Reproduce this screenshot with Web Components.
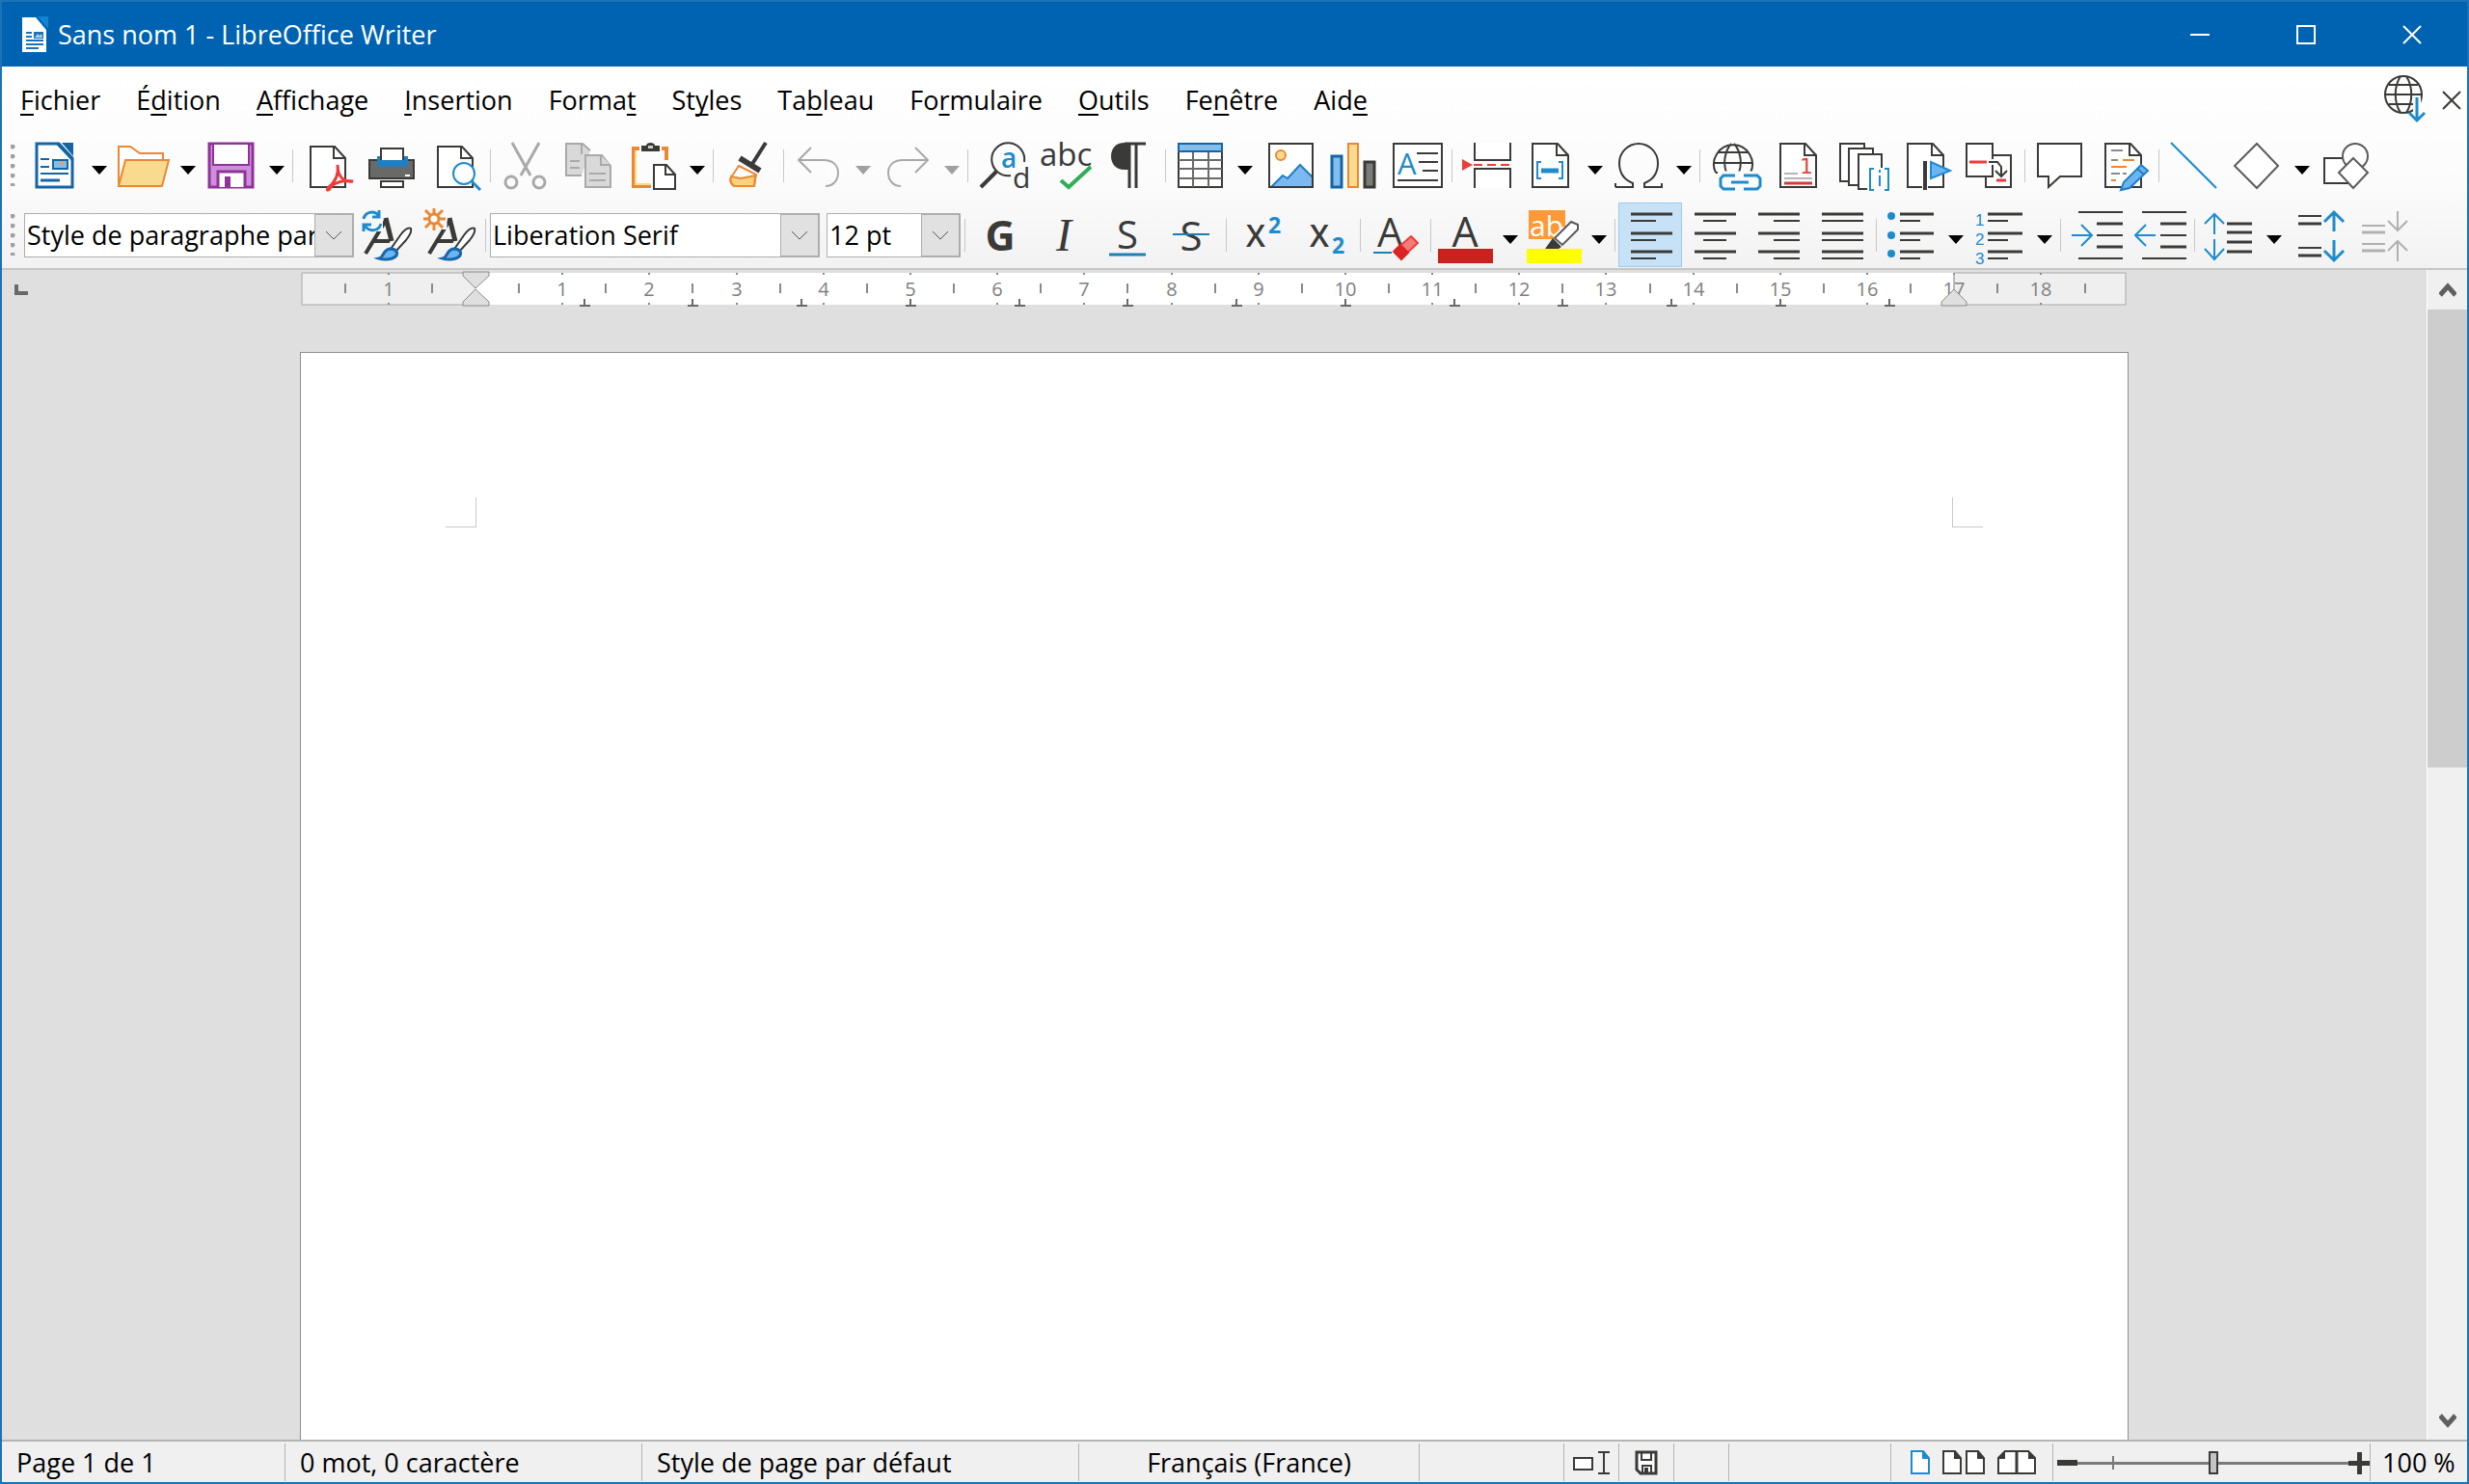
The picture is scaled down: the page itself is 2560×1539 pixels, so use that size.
<!DOCTYPE html>
<html lang="fr">
<head>
<meta charset="utf-8">
<title>Sans nom 1 - LibreOffice Writer</title>
<style>
  html, body { margin: 0; height: 100%; }
  body {
    font-family: "Open Sans", "Noto Sans", sans-serif;
    font-size: 27px;
    color: #000;
    overflow: hidden;
  }
</style>
</head>
<body>

<writer-window>
  <title-bar slot="title">Sans nom 1 - LibreOffice Writer</title-bar>

  <menu-bar slot="menu">
    <menu-item><u>F</u>ichier</menu-item>
    <menu-item>É<u>d</u>ition</menu-item>
    <menu-item><u>A</u>ffichage</menu-item>
    <menu-item><u>I</u>nsertion</menu-item>
    <menu-item>Forma<u>t</u></menu-item>
    <menu-item>St<u>y</u>les</menu-item>
    <menu-item>Ta<u>b</u>leau</menu-item>
    <menu-item>Fo<u>r</u>mulaire</menu-item>
    <menu-item><u>O</u>utils</menu-item>
    <menu-item>Fe<u>n</u>être</menu-item>
    <menu-item>Aid<u>e</u></menu-item>
  </menu-bar>

  <tool-bar slot="tools" label="Standard">
    <tool-button icon="new" label="Nouveau" menu></tool-button>
    <tool-button icon="open" label="Ouvrir" menu></tool-button>
    <tool-button icon="save" label="Enregistrer" menu></tool-button>
    <tool-separator></tool-separator>
    <tool-button icon="pdf" label="Exporter au format PDF"></tool-button>
    <tool-button icon="print" label="Imprimer"></tool-button>
    <tool-button icon="preview" label="Aperçu"></tool-button>
    <tool-separator></tool-separator>
    <tool-button icon="cut" label="Couper" disabled></tool-button>
    <tool-button icon="copy" label="Copier" disabled></tool-button>
    <tool-button icon="paste" label="Coller" menu></tool-button>
    <tool-separator></tool-separator>
    <tool-button icon="clone" label="Cloner le formatage"></tool-button>
    <tool-separator></tool-separator>
    <tool-button icon="undo" label="Annuler" menu disabled></tool-button>
    <tool-button icon="redo" label="Rétablir" menu disabled></tool-button>
    <tool-separator></tool-separator>
    <tool-button icon="find" label="Rechercher et remplacer"></tool-button>
    <tool-button icon="spelling" label="Orthographe"></tool-button>
    <tool-button icon="marks" label="Marques de formatage"></tool-button>
    <tool-separator></tool-separator>
    <tool-button icon="table" label="Tableau" menu></tool-button>
    <tool-button icon="image" label="Image"></tool-button>
    <tool-button icon="chart" label="Diagramme"></tool-button>
    <tool-button icon="textbox" label="Zone de texte"></tool-button>
    <tool-separator></tool-separator>
    <tool-button icon="pagebreak" label="Saut de page"></tool-button>
    <tool-button icon="field" label="Champ" menu></tool-button>
    <tool-button icon="symbol" label="Caractère spécial" menu></tool-button>
    <tool-separator></tool-separator>
    <tool-button icon="link" label="Hyperlien"></tool-button>
    <tool-button icon="footnote" label="Note de bas de page"></tool-button>
    <tool-button icon="endnote" label="Entrée d'index"></tool-button>
    <tool-button icon="bookmark" label="Repère de texte"></tool-button>
    <tool-button icon="crossref" label="Renvoi"></tool-button>
    <tool-separator></tool-separator>
    <tool-button icon="comment" label="Commentaire"></tool-button>
    <tool-button icon="track" label="Suivi des modifications"></tool-button>
    <tool-separator></tool-separator>
    <tool-button icon="line" label="Ligne"></tool-button>
    <tool-button icon="shapes" label="Formes" menu></tool-button>
    <tool-button icon="draw" label="Fonctions de dessin"></tool-button>
  </tool-bar>

  <tool-bar slot="tools" label="Formatage">
    <combo-box label="Style de paragraphe" value="Style de paragraphe par défaut"></combo-box>
    <tool-button icon="styleupdate" label="Actualiser le style"></tool-button>
    <tool-button icon="stylenew" label="Nouveau style"></tool-button>
    <tool-separator></tool-separator>
    <combo-box label="Nom de police" value="Liberation Serif"></combo-box>
    <combo-box label="Taille de police" value="12 pt" narrow></combo-box>
    <tool-separator></tool-separator>
    <tool-button icon="bold" label="Gras"></tool-button>
    <tool-button icon="italic" label="Italique"></tool-button>
    <tool-button icon="underline" label="Souligné"></tool-button>
    <tool-button icon="strike" label="Barré"></tool-button>
    <tool-separator></tool-separator>
    <tool-button icon="sup" label="Exposant"></tool-button>
    <tool-button icon="sub" label="Indice"></tool-button>
    <tool-separator></tool-separator>
    <tool-button icon="clear" label="Effacer le formatage"></tool-button>
    <tool-separator></tool-separator>
    <tool-button icon="fontcolor" label="Couleur de police" menu></tool-button>
    <tool-button icon="highlight" label="Surlignage" menu></tool-button>
    <tool-separator></tool-separator>
    <tool-button icon="left" label="Aligner à gauche" active></tool-button>
    <tool-button icon="center" label="Centrer"></tool-button>
    <tool-button icon="right" label="Aligner à droite"></tool-button>
    <tool-button icon="justify" label="Justifier"></tool-button>
    <tool-separator></tool-separator>
    <tool-button icon="bullets" label="Puces" menu></tool-button>
    <tool-button icon="numbers" label="Numérotation" menu></tool-button>
    <tool-separator></tool-separator>
    <tool-button icon="indent" label="Augmenter le retrait"></tool-button>
    <tool-button icon="outdent" label="Diminuer le retrait"></tool-button>
    <tool-separator></tool-separator>
    <tool-button icon="spacing" label="Interligne" menu></tool-button>
    <tool-button icon="parainc" label="Augmenter l'espacement"></tool-button>
    <tool-button icon="paradec" label="Diminuer l'espacement" disabled></tool-button>
  </tool-bar>

  <doc-ruler slot="ruler"></doc-ruler>
  <doc-page slot="page"></doc-page>
  <scroll-bar slot="scroll"></scroll-bar>
  <status-bar slot="status"></status-bar>
</writer-window>

<script>
// Toolbar icons, all on a 56 x 56 grid
const INK = '#3a3a38';
const BLUE = '#1e8bcd';
const RED = '#ed3d3b';
const GREY = '#a9a9a9';

const sheet = `<path fill="#fff" stroke="${INK}" d="M9 5H35L46 17V50H9Z"/><path fill="none" stroke="${INK}" d="M34 5V17H46"/>`;

const brushA = `
  <path stroke="${INK}" stroke-width="4" fill="none" d="M6 47L28 11"/>
  <path stroke="${INK}" stroke-width="5" fill="none" d="M27 10L33 34"/>
  <path stroke="${INK}" stroke-width="4" d="M13 34H31"/>
  <path fill="#fff" stroke="${INK}" stroke-width="2" d="M53 21C49 19 45 24 42 28L33 41L37 45L48 33C52 28 54 24 53 21Z"/>
  <path fill="#6cb4f2" stroke="#1667ad" stroke-width="3" d="M20 52C25 51 24 43 31 42C37 42 40 45 38 49C35 53 26 54 20 52Z"/>`;

// one paragraph of text lines: y positions with their left and right ends
function rows(list, colour = INK) {
  return list.map(([y, x1, x2, w = 3]) => `<path stroke="${colour}" stroke-width="${w}" d="M${x1} ${y}H${x2}"/>`).join('');
}

const letter = (txt, x, y, size, extra = '') => `<text x="${x}" y="${y}" font-size="${size}" fill="${INK}" stroke="none" ${extra}>${txt}</text>`;

const ICONS = {
  new: `<path fill="#fff" stroke="#1565a5" stroke-width="3" d="M9 5H32L46 20V50H9Z"/>
    <path fill="#1565a5" d="M35 4H47V18Z"/><path stroke="#1565a5" d="M30 5L46 22"/>
    ${rows([[21, 13, 22, 2], [29, 13, 22, 2], [36, 13, 42, 2], [43, 13, 33, 3]], '#1565a5')}
    <rect x="26" y="22" width="15" height="9" fill="#83beec" stroke="#1565a5"/><circle cx="35" cy="25" r="2" fill="#f5a04c"/>`,
  open: `<path fill="#fff" stroke="#ed8733" d="M2 48V8H14L24 15H48V22"/>
    <path fill="#f8db8f" stroke="#ed8733" d="M9 22H54L47 49H2Z"/>`,
  save: `<rect x="4" y="5" width="45" height="45" fill="#cd8fda" stroke="#8e3399" stroke-width="3"/>
    <path fill="#fff" stroke="#8e3399" d="M8 5H45V27H8Z"/>
    <path fill="#fff" stroke="#8e3399" stroke-width="3" d="M13 50V34H41V50"/>
    <path fill="#8e3399" d="M20 39H26V50H20Z"/>`,
  pdf: `<path fill="#fff" stroke="${INK}" d="M10 8H35L46 20V50H10Z"/><path stroke="${INK}" fill="none" d="M34 8V20H46"/>
    <path stroke="${RED}" stroke-width="3" fill="none" d="M38 27C38 41 46 45 54 44C44 42 34 46 31 50C29 54 26 54 28 51C34 46 40 38 38 27"/>`,
  print: `<path fill="#696966" stroke="${INK}" d="M5 22H51V41H5Z"/>
    <path fill="#1e7fc2" d="M13 18H45V29H13Z"/>
    <path fill="#fff" stroke="${INK}" d="M17 23V10H40V23"/><path fill="#1e7fc2" d="M16 22H41V27H16Z"/>
    <path fill="#fff" d="M42 37H47V39H42Z"/><path fill="#fff" stroke="${INK}" d="M17 44H40V50H17Z"/>`,
  preview: `<path fill="#fff" stroke="${INK}" d="M10 8H35L46 20V50H10Z"/><path stroke="${INK}" fill="none" d="M34 8V20H46"/>
    <circle cx="37" cy="36" r="11" fill="#fff" stroke="${BLUE}"/><path stroke="${BLUE}" stroke-width="3" d="M45 44L54 53"/>`,
  cut: `<g fill="none" stroke="${GREY}" stroke-width="3"><path d="M14 4L33 38M42 4L23 38"/><circle cx="13" cy="45" r="6"/><circle cx="42" cy="45" r="6"/></g>`,
  copy: `<g fill="#d9d9d9" stroke="${GREY}"><path d="M20 38H4V5H21L29 12"/><path d="M20 5V16"/><path d="M8 23H18M8 30H18"/>
    <path d="M24 17H41L50 28V50H24Z"/><path d="M40 17V27H50M28 36H45M28 43H45"/></g>`,
  paste: `<path fill="none" stroke="#ed8733" stroke-width="4" d="M14 10H8V49H26M37 10H42V22"/>
    <path fill="none" stroke="#f8db8f" stroke-width="2" d="M10 12V47H26"/>
    <path fill="${INK}" d="M16 7H21C21 3 30 3 30 7H35V13H16Z"/><path fill="#ccc" d="M23 7H28V10H23Z"/>
    <path fill="#fff" stroke="${INK}" d="M29 27H42L51 37V52H29Z"/><path fill="none" stroke="${INK}" d="M41 27V37H51"/>`,
  clone: `<path fill="#fff" stroke="#ed8733" d="M18 28L36 37L34 49H13C9 46 9 42 10 40Z"/>
    <path fill="#f8d27f" stroke="#ed8733" d="M10 39L20 41L35 38L34 49H13C9 46 9 42 10 39Z"/>
    <path stroke="${INK}" stroke-width="4" d="M46 4L32 26"/><path stroke="${INK}" stroke-width="6" d="M19 20L40 33"/>`,
  undo: `<path fill="none" stroke="${GREY}" d="M20 9L7 22L20 35M7 22H33C43 22 48 28 48 35C48 43 43 49 35 49"/>`,
  redo: `<path fill="none" stroke="${GREY}" d="M36 9L49 22L36 35M49 22H23C13 22 8 28 8 35C8 43 13 49 21 49"/>`,
  find: `<path fill="none" stroke="${INK}" d="M50 24A17 17 0 1 0 36 38"/><path stroke="${INK}" stroke-width="4" d="M21 34L5 50"/>
    ${letter('a', 26, 30, 28, 'style="fill:#1e8bcd" font-weight="600"')}${letter('d', 38, 51, 30)}`,
  spelling: `${letter('abc', 0, 28, 33)}<path fill="none" stroke="#2fae5a" stroke-width="4" d="M22 43L30 50L53 29"/>`,
  marks: `<path fill="${INK}" d="M27 4H22C13 4 8 10 8 18C8 26 13 32 22 32H27Z"/><path stroke="${INK}" fill="none" stroke-width="3" d="M22 5H44M27 5V51M34 5V51"/>`,
  table: `<path fill="#fff" stroke="${INK}" d="M5 12H50V50H5Z"/><path stroke="#6a6a68" fill="none" d="M20 13V50M36 13V50M5 22H50M5 31H50M5 41H50"/>
    <path fill="#83beec" stroke="#1565a5" d="M5 5H50V13H5Z"/>`,
  image: `<path fill="#fff" d="M6 5H53V50H6Z"/><circle cx="19" cy="17" r="5" fill="#f8db8f" stroke="#ed8733"/>
    <path fill="#7cb9f0" stroke="#1e7fc2" d="M9 50L21 38L26 41L39 27L52 40V50Z"/><path fill="none" stroke="${INK}" d="M7 5H52V50H7Z"/>`,
  chart: `<path fill="#83beec" stroke="#1565a5" stroke-width="3" d="M6 18H16V50H6Z"/><path fill="#f8db8f" stroke="#ed8733" d="M23 5H33V50H23Z"/>
    <path fill="#7b7b78" stroke="${INK}" stroke-width="3" d="M40 24H50V50H40Z"/>`,
  textbox: `<path fill="#fff" stroke="${INK}" d="M4 5H54V50H4Z"/>${letter('A', 8, 37, 31, 'style="fill:#1e8bcd"')}
    ${rows([[15, 28, 50, 2], [24, 30, 50, 2], [33, 34, 50, 2], [43, 8, 50, 2]])}`,
  pagebreak: `<path fill="#fff" stroke="${INK}" d="M15 4V22H52V4M15 51V31H52V51"/><path stroke="${RED}" stroke-dasharray="9 5" d="M14 27H52"/><path fill="${RED}" d="M2 21L13 27L2 33Z"/>`,
  field: `${sheet}<path fill="none" stroke="${BLUE}" d="M18 24H14V41H18M36 24H40V41H36"/><path stroke="${BLUE}" stroke-width="5" d="M18 33H36"/>`,
  symbol: `<path fill="none" stroke="${INK}" d="M3 50H21V46C11 42 7 34 7 25A20 20 0 0 1 47 25C47 34 43 42 33 46V50H51V46M3 50V46"/>`,
  link: `<path fill="none" stroke="${INK}" d="M8 35A20 20 0 1 1 44 35M6 25H45M10 14H41M19 35C15 24 18 12 24 5M32 35C36 24 33 12 27 5M8 35H44"/>
    <path fill="none" stroke="#fbfbfb" stroke-width="7" d="M10 37H58"/>
    <path fill="none" stroke="${BLUE}" stroke-width="3" d="M28 38H16L13 41V49L16 52H28M37 38H51L54 41V49L51 52H37M24 45H42"/>`,
  footnote: `${sheet}<text x="29" y="36" font-size="22" fill="${RED}" font-family="DejaVu Sans">1</text>
    ${rows([[36, 13, 27, 2], [41, 13, 42, 2]], '#b5b5b5')}${rows([[46, 13, 42, 3]], '#d8393a')}`,
  endnote: `<g fill="#fff" stroke="${INK}"><path d="M13 44H5V5H30V10"/><path d="M23 48H14V10H39V16"/><path d="M33 52H24V16H48V30"/></g>
    <path fill="none" stroke="${BLUE}" d="M40 31H36V53H40M51 31H55V53H51M46 38V49M46 32V35"/>`,
  bookmark: `${sheet}<path fill="#fff" d="M24 24H30V52H24Z"/><path stroke="${INK}" stroke-width="4" d="M27 23V53"/><path fill="#6cb4f2" stroke="${BLUE}" d="M33 24L53 33L33 41Z"/>`,
  crossref: `<path fill="#fff" stroke="${INK}" d="M24 17H50V50H24Z"/><path fill="#fff" stroke="${INK}" d="M4 5H31V39H4Z"/>
    <path stroke="#fff" stroke-width="6" d="M28 24H36"/><path fill="none" stroke="${INK}" d="M27 24H36L40 29V39M34 33L40 39L46 33"/>
    <path stroke="${RED}" stroke-width="3" d="M7 24H25M35 43H45"/>`,
  comment: `<path fill="#fff" stroke="${INK}" d="M5 5H50V39H28L16 50V39H5Z"/>`,
  track: `${sheet}<path stroke="#8b8b88" d="M15 12H27M15 22H22M15 36H24M27 36H31"/><path stroke="#ed8733" stroke-width="2" d="M27 22H39M15 29H31M15 43H20"/>
    <path fill="#6cb4f2" stroke="#1e7fc2" d="M46 27L53 33L34 51L25 53L28 45Z"/><path stroke="#1e7fc2" d="M42 31L49 37"/>`,
  line: `<path stroke="${BLUE}" stroke-width="2" d="M4 4L51 51"/>`,
  shapes: `<path fill="#fff" stroke="#5c5c5a" stroke-width="2" d="M27 5L49 28L27 51L4 28Z"/>`,
  draw: `<path fill="#fff" stroke="${INK}" d="M5 20H33V46H5Z"/><circle cx="37" cy="18" r="13" fill="#fff" stroke="#5c5c5a"/>
    <path fill="#fff" stroke="#5c5c5a" d="M35 20L50 35L35 51L20 35Z"/>`,

  styleupdate: `${brushA}<path stroke="#fafafa" stroke-width="6" d="M21 2V24"/>
    <path fill="none" stroke="${BLUE}" stroke-width="3" d="M4 11C6 3 15 2 20 8M20 2V9H13M22 16C20 24 10 25 5 18M4 24V17H12"/>`,
  stylenew: `${brushA}<path stroke="#fafafa" stroke-width="5" d="M22 2V22"/><circle cx="11" cy="11" r="5" fill="#fff" stroke="#ed8733" stroke-width="3"/>
    <path stroke="#ed8733" stroke-width="3" d="M11 0V5M11 17V23M0 11H5M17 11H23M2 2L7 7M15 15L20 20M20 2L15 7M7 15L2 20"/>`,
  bold: letter('G', 28, 44, 43, 'font-weight="700" text-anchor="middle"'),
  italic: letter('I', 28, 44, 48, 'font-style="italic" font-family="Liberation Serif" text-anchor="middle"'),
  underline: `${letter('S', 28, 42, 40, 'text-anchor="middle"')}<path stroke="#1e7fb5" stroke-width="3" d="M9 48H47"/>`,
  strike: `${letter('S', 28, 44, 42, 'text-anchor="middle"')}<path stroke="#1e7fb5" d="M9 27H47"/>`,
  sup: `${letter('X', 12, 40, 32, 'font-weight="600"')}${letter('2', 35, 26, 23, 'font-weight="700" style="fill:#1e8bcd"')}`,
  sub: `${letter('X', 12, 40, 32, 'font-weight="600"')}${letter('2', 35, 47, 23, 'font-weight="700" style="fill:#1e8bcd"')}`,
  clear: `${letter('A', 9, 40, 42)}<path stroke="#1e7fb5" d="M5 46H24"/>
    <path fill="#f47c7d" stroke="${RED}" d="M44 29L51 36L36 50L28 43Z"/><path fill="#dc2424" stroke="#dc2424" d="M33 38L41 46L34 53L26 45Z"/>`,
  fontcolor: `${letter('A', 27, 40, 43, 'text-anchor="middle"')}<path fill="#c9211e" d="M-1 42H56V57H-1Z"/>`,
  highlight: `<path fill="#fd9a37" d="M1 2H39V32H1Z"/><text x="2" y="29" font-size="30" fill="#fff">ab</text>
    <path stroke="#f8f8f8" stroke-width="15" d="M31 34L42 24"/>
    <path fill="#fff" stroke="#5c5c5a" d="M45 14L52 17V22L36 38L28 31Z"/><path fill="${INK}" d="M26 31L35 40L32 42H18Z"/>
    <path fill="#ffff00" d="M-1 42H56V57H-1Z"/>`,
  left: rows([[6, 8, 51], [13, 8, 34, 2], [26, 8, 51], [33, 8, 34, 2], [45, 8, 51], [52, 8, 34, 2]]),
  center: rows([[6, 8, 51], [13, 17, 41, 2], [26, 8, 51], [33, 17, 41, 2], [45, 8, 51], [52, 17, 41, 2]]),
  right: rows([[6, 8, 51], [13, 24, 51, 2], [26, 8, 51], [33, 24, 51, 2], [45, 8, 51], [52, 24, 51, 2]]),
  justify: rows([[6, 8, 51], [13, 8, 51, 2], [26, 8, 51], [33, 8, 51, 2], [45, 8, 51], [52, 8, 51, 2]]),
  bullets: `<g fill="${BLUE}"><circle cx="7" cy="8" r="4"/><circle cx="7" cy="28" r="4"/><circle cx="7" cy="47" r="4"/></g>
    ${rows([[6, 16, 51], [13, 16, 37, 2], [26, 16, 51], [33, 16, 37, 2], [45, 16, 51], [52, 16, 37, 2]])}`,
  numbers: `<g fill="${BLUE}" font-family="Liberation Sans" font-size="17"><text x="2" y="18">1</text><text x="2" y="38">2</text><text x="2" y="58">3</text></g>
    ${rows([[6, 15, 51], [13, 15, 36, 2], [26, 15, 51], [33, 15, 36, 2], [45, 15, 51], [52, 15, 36, 2]])}`,
  indent: `${rows([[4, 10, 56, 2], [16, 29, 56], [28, 29, 56, 2], [40, 29, 56], [52, 10, 56, 2]])}<path fill="none" stroke="${BLUE}" stroke-width="2" d="M3 28H23M13 17L24 28L13 39"/>`,
  outdent: `${rows([[4, 10, 56, 2], [16, 29, 56], [28, 29, 56, 2], [40, 29, 56], [52, 10, 56, 2]])}<path fill="none" stroke="${BLUE}" stroke-width="2" d="M24 28H4M14 17L3 28L14 39"/>`,
  spacing: `${rows([[16, 25, 51], [25, 25, 51], [35, 25, 51], [45, 25, 51]])}<path fill="none" stroke="${BLUE}" stroke-width="2" d="M12 27V6M2 16L12 6L22 16M12 32V53M2 42L12 53L22 42"/>`,
  parainc: `${rows([[8, 7, 31, 2], [16, 7, 31], [41, 7, 31, 2], [49, 7, 31]])}<path fill="none" stroke="${BLUE}" stroke-width="3" d="M44 24V4M34 14L44 4L54 14M44 33V54M34 44L44 54L54 44"/>`,
  paradec: `${rows([[18, 7, 31, 2], [25, 7, 31], [37, 7, 31, 2], [44, 7, 31]], '#b0b0b0')}<path fill="none" stroke="#b0b0b0" stroke-width="2" d="M44 3V23M34 13L44 23L54 13M44 55V34M34 44L44 34L54 44"/>`
};

class BaseElement extends HTMLElement {
  constructor() {
    super();
    this.attachShadow({ mode: 'open' });
  }

  connectedCallback() {
    this.shadowRoot.innerHTML = this.render();
  }
}

class WriterWindow extends BaseElement {
  render() {
    return `<style>
        :host {
          display: flex;
          flex-direction: column;
          box-sizing: border-box;
          height: 100vh;
          border: 2px solid #1c72b4;
          background: #dfdfdf;
        }
        .head {
          background: linear-gradient(#fff, #fbfbfb 60%, #f2f2f2);
          border-bottom: 2px solid #c6c6c6;
        }
        .work { flex: 1; min-height: 0; display: flex; }
        .desk { flex: 1; min-width: 0; overflow: hidden; display: flex; flex-direction: column; }
      </style>
      <slot name="title"></slot>
      <div class="head"><slot name="menu"></slot><slot name="tools"></slot></div>
      <div class="work">
        <div class="desk"><slot name="ruler"></slot><slot name="page"></slot></div>
        <slot name="scroll"></slot>
      </div>
      <slot name="status"></slot>`;
  }
}

class TitleBar extends BaseElement {
  render() {
    return `<style>
        :host {
          display: flex;
          align-items: center;
          height: 67px;
          padding-right: 2px;
          background: #0063b1;
          color: #fff;
        }
        .logo { width: 28px; height: 38px; margin: 0 10px 0 20px; }
        .name { flex: 1; }
        button { width: 110px; height: 67px; padding: 0; border: 0; background: none; }
        button svg { display: block; margin: auto; }
      </style>
      <svg class="logo" viewBox="0 0 28 38">
        <path fill="#fff" d="M1 1H15L26 14V37H1Z"/><path fill="#0f86cf" d="M17 0H28V13Z"/>
        <path stroke="#1c72b4" stroke-width="2" d="M5 17H11M5 21H11M5 25H23M5 29H23M5 33H18"/>
        <path fill="#1c72b4" d="M13 16H23V23H13Z"/><path fill="#a9d4f3" d="M14 22L17 18L19 20L21 18L22 22Z"/>
      </svg>
      <span class="name"><slot></slot></span>
      <button aria-label="Réduire"><svg width="20" height="20"><path stroke="#fff" stroke-width="2" d="M0 10H20"/></svg></button>
      <button aria-label="Agrandir"><svg width="20" height="20"><path fill="none" stroke="#fff" stroke-width="2" d="M1 1H19V19H1Z"/></svg></button>
      <button aria-label="Fermer"><svg width="20" height="20"><path stroke="#fff" stroke-width="2" d="M1 1L19 19M19 1L1 19"/></svg></button>`;
  }
}

class MenuBar extends BaseElement {
  render() {
    return `<style>
        :host { display: flex; align-items: center; height: 69px; }
        nav { flex: 1; display: flex; }
        button { padding: 0; border: 0; background: none; }
        svg { display: block; }
        .update { margin-right: 16px; }
        .close { margin-right: 6px; }
      </style>
      <nav><slot></slot></nav>
      <button class="update" aria-label="Mise à jour disponible">
        <svg width="44" height="54" viewBox="0 0 44 54">
          <g fill="none" stroke="${INK}" stroke-width="2"><circle cx="20" cy="21" r="19"/><path d="M1 21H39M5 11H35M5 31H35M17 2C10 13 10 29 17 40M23 2C30 13 30 29 23 40"/></g>
          <path stroke="#fcfcfc" stroke-width="8" d="M34 24V49"/>
          <path fill="none" stroke="${BLUE}" stroke-width="3" d="M34 24V48M26 40L34 48L42 40"/>
        </svg>
      </button>
      <button class="close" aria-label="Fermer le document">
        <svg width="20" height="20"><path stroke="${INK}" stroke-width="2" d="M1 1L19 19M19 1L1 19"/></svg>
      </button>`;
  }
}

class MenuItem extends BaseElement {
  render() {
    return `<style>
        :host { display: block; }
        button { font: inherit; color: inherit; padding: 0 18px 0 19px; border: 0; background: none; line-height: 40px; white-space: nowrap; }
        ::slotted(u) { text-decoration-thickness: 2px; text-underline-offset: 4px; text-decoration-skip-ink: none; }
      </style><button><slot></slot></button>`;
  }
}

class ToolBar extends BaseElement {
  render() {
    return `<style>
        :host { display: flex; align-items: center; height: 67px; padding-bottom: 5px; }
        :host(:last-of-type) { padding-bottom: 1px; }
        .grip { width: 5px; height: 43px; margin: 0 8px 0 9px; background: radial-gradient(circle at 2px 2px, #a0a0a0 2px, transparent 3px) 0 0 / 5px 10px; }
      </style>
      <span class="grip" role="separator" aria-label="${this.getAttribute('label')}"></span><slot></slot>`;
  }
}

class ToolSeparator extends BaseElement {
  render() {
    return `<style>
        :host { flex: none; box-sizing: border-box; width: 7px; height: 34px; padding-left: 3px; }
        i { display: block; width: 1px; height: 100%; background: #c8c8c8; }
      </style><i></i>`;
  }
}

class ToolButton extends BaseElement {
  render() {
    const off = this.hasAttribute('disabled');
    const label = this.getAttribute('label');
    const more = this.hasAttribute('menu')
      ? `<button class="more" aria-label="${label} : options" ${off ? 'disabled' : ''}><svg width="16" height="10"><path fill="${off ? '#a0a0a0' : '#000'}" d="M0 0H16L8 9Z"/></svg></button>`
      : '';
    return `<style>
        :host { display: flex; flex: none; height: 67px; }
        button { display: flex; align-items: center; justify-content: center; padding: 0; border: 0; background: none; font: inherit; }
        .main { width: 66px; }
        .more { width: 26px; padding-top: 10px; }
        svg { display: block; overflow: visible; }
        :host([active]) .main { background: #c7e1f7; box-shadow: inset 0 0 0 1px #9ecbef; }
      </style>
      <button class="main" aria-label="${label}" ${off ? 'disabled' : ''}>
        <svg width="56" height="56" viewBox="0 0 56 56" stroke-width="2">${ICONS[this.getAttribute('icon')]}</svg>
      </button>${more}`;
  }
}

class ComboBox extends BaseElement {
  render() {
    return `<style>
        :host { flex: none; width: 342px; margin: 0 1px; }
        :host([narrow]) { width: 139px; margin-left: 6px; }
        .box { display: grid; height: 46px; box-sizing: border-box; border: 1px solid #adadad; background: #fff; }
        select, .drop { grid-area: 1 / 1; min-width: 0; }
        select {
          appearance: none;
          font: inherit;
          color: inherit;
          border: 0;
          margin: 0 40px 0 0;
          padding: 0 0 0 2px;
          background: none;
          overflow: hidden;
          text-overflow: clip;
        }
        .drop {
          justify-self: end;
          width: 40px;
          box-sizing: border-box;
          display: flex;
          align-items: center;
          justify-content: center;
          background: #e1e1e1;
          border: 1px solid #adadad;
          pointer-events: none;
        }
      </style>
      <div class="box">
        <select aria-label="${this.getAttribute('label')}"><option>${this.getAttribute('value')}</option></select>
        <span class="drop"><svg width="18" height="10"><path fill="none" stroke="#555" d="M1 1L9 9L17 1"/></svg></span>
      </div>`;
  }
}

class DocRuler extends BaseElement {
  render() {
    const zero = 181;
    const at = cm => Math.round(zero + cm * 1894 / 21);
    let marks = '';
    let labels = '';
    for (let half = -3; half <= 37; half++) {
      const x = at(half / 2);
      if (half === 0) continue;
      if (half % 2) {
        marks += `<path d="M${x} 14V24"/>`;
      } else {
        marks += `<path d="M${x} 3V5M${x} 34V36"/>`;
        labels += `<text x="${x}" y="27">${Math.abs(half / 2)}</text>`;
      }
    }
    let tabs = '';
    for (let i = 1; i <= 13; i++) {
      const x = at(i * 1.25);
      tabs += `<path d="M${x} 30V36M${x - 5} 37H${x + 6}"/>`;
    }
    return `<style>
        :host { display: grid; grid-template-columns: 1fr auto 1fr; align-items: center; height: 40px; }
        .tab { margin-left: 13px; }
        svg { display: block; }
        text { font-size: 20px; fill: #808080; text-anchor: middle; }
      </style>
      <svg class="tab" width="14" height="11"><path fill="#696969" d="M0 0H4V7H14V11H0Z"/></svg>
      <svg width="1894" height="40" viewBox="0 0 1894 40">
        <path fill="#fff" d="M181 3H1714V36H181Z"/>
        <path fill="#efefef" stroke="#a8a8a8" d="M181 3H1V36H181M1714 36V3H1892V36Z"/>
        <g stroke="#8a8a8a" stroke-width="2">${marks}</g>
        ${labels}
        <path stroke="#a8a8a8" d="M1714 3V36"/>
        <g stroke="#696969" stroke-width="2">${tabs}</g>
        <g fill="#dfdfdf" stroke="#8a8a8a"><path d="M168 2H195V6L181 19L168 6Z"/><path d="M181 20L195 33V37H168V33Z"/><path d="M1714 20L1727 33V37H1701V33Z"/></g>
      </svg>`;
  }
}

class DocPage extends BaseElement {
  render() {
    return `<style>
        :host { flex: 1; min-height: 0; display: flex; justify-content: center; padding-top: 45px; }
        .sheet {
          box-sizing: border-box;
          width: 1896px;
          padding: 150px 150px 0;
          border: 1px solid #8e8e8e;
          border-bottom: 0;
          background: #fff;
          display: flex;
          justify-content: space-between;
        }
        i { width: 31px; height: 30px; border: 0 solid #c9c9c9; border-bottom-width: 1px; }
        .l { border-right-width: 1px; }
        .r { border-left-width: 1px; }
      </style>
      <div class="sheet" role="textbox" aria-label="Document"><i class="l"></i><i class="r"></i></div>`;
  }
}

class ScrollBar extends BaseElement {
  render() {
    return `<style>
        :host { width: 41px; flex: none; display: flex; flex-direction: column; background: #f0f0f0; border-left: 1px solid #fff; }
        button { height: 41px; border: 0; padding: 0; background: none; }
        svg { display: block; margin: auto; }
        .track { flex: 1; }
        .thumb { height: 42%; background: #cdcdcd; }
      </style>
      <button aria-label="Défiler vers le haut"><svg width="18" height="16"><path fill="none" stroke="#5f5f5f" stroke-width="5" d="M1 13L9 4L17 13"/></svg></button>
      <div class="track"><div class="thumb"></div></div>
      <button aria-label="Défiler vers le bas"><svg width="18" height="16"><path fill="none" stroke="#5f5f5f" stroke-width="5" d="M1 3L9 12L17 3"/></svg></button>`;
  }
}

class StatusBar extends BaseElement {
  render() {
    return `<style>
        :host {
          display: grid;
          grid-template-columns: 294px 370px 453px 353px 150px 57px 57px 57px 1fr 168px 329px 100px;
          box-sizing: border-box;
          height: 44px;
          padding-top: 1px;
          border-top: 2px solid #b4b4b4;
          background: #f0f0f0;
        }
        .cell { display: flex; align-items: center; box-sizing: border-box; margin: 1px 0; border-right: 1px solid #b4b4b4; padding-left: 15px; white-space: nowrap; }
        .cell:last-child { border: 0; padding-left: 12px; }
        .mid { justify-content: center; padding: 0; }
        .zoom { padding: 0 0 0 4px; }
        button { border: 0; padding: 0; background: none; }
        svg { display: block; }
        .views { gap: 13px; padding-left: 20px; }
        input {
          appearance: none;
          flex: 1;
          min-width: 0;
          height: 24px;
          margin: 0;
          background:
            linear-gradient(#7a7a7a, #7a7a7a) 0 11px / 100% 3px no-repeat,
            linear-gradient(#7a7a7a, #7a7a7a) 36px 5px / 2px 14px no-repeat;
        }
        input::-webkit-slider-thumb { appearance: none; width: 10px; height: 24px; box-sizing: border-box; border: 2px solid ${INK}; background: #c4c4c4; }
      </style>
      <span class="cell">Page 1 de 1</span>
      <span class="cell">0 mot, 0 caractère</span>
      <span class="cell">Style de page par défaut</span>
      <span class="cell mid">Français (France)</span>
      <span class="cell"></span>
      <span class="cell mid"><svg width="40" height="26" fill="none" stroke="${INK}" stroke-width="2"><path fill="#fff" d="M2 8H21V20H2Z"/><path d="M27 2H39M33 2V24M27 24H39"/></svg></span>
      <span class="cell mid"><svg width="24" height="26" fill="none" stroke="${INK}" stroke-width="3"><path fill="#fff" d="M2 2H22V24H6L2 20Z"/><path stroke-width="2" d="M7 3V10H17V3M8 24V16H17V24"/><path fill="${INK}" stroke="none" d="M10 18H14V24H10Z"/></svg></span>
      <span class="cell"></span>
      <span class="cell"></span>
      <span class="cell views">
        <button aria-label="Page unique"><svg width="20" height="25"><path fill="#fff" stroke="${BLUE}" stroke-width="2" d="M1 1H13L19 8V24H1Z"/><path fill="${BLUE}" d="M12 0L20 9H12Z"/></svg></button>
        <button aria-label="Pages multiples"><svg width="44" height="25" stroke="${INK}" stroke-width="2"><path fill="#fff" d="M1 1H13L19 8V24H1ZM25 1H37L43 8V24H25Z"/><path fill="${INK}" stroke="none" d="M12 0L20 9H12ZM36 0L44 9H36Z"/></svg></button>
        <button aria-label="Mode livre"><svg width="40" height="25" stroke="${INK}" stroke-width="2"><path fill="#fff" d="M20 1H8L1 8V24H39V8L32 1ZM20 1V24"/><path stroke-width="3" d="M20 1V24"/><path fill="${INK}" stroke="none" d="M8 0L0 9H8ZM32 0L40 9H32Z"/></svg></button>
      </span>
      <span class="cell zoom">
        <button aria-label="Zoom arrière"><svg width="21" height="24"><path fill="${INK}" d="M0 9H21V15H0Z"/></svg></button>
        <input type="range" aria-label="Zoom" min="0" max="100" value="50">
        <button aria-label="Zoom avant"><svg width="22" height="24"><path fill="${INK}" d="M0 10H9V1H14V10H22V15H14V24H9V15H0Z"/></svg></button>
      </span>
      <span class="cell">100 %</span>`;
  }
}

customElements.define('writer-window', WriterWindow);
customElements.define('title-bar', TitleBar);
customElements.define('menu-bar', MenuBar);
customElements.define('menu-item', MenuItem);
customElements.define('tool-bar', ToolBar);
customElements.define('tool-separator', ToolSeparator);
customElements.define('tool-button', ToolButton);
customElements.define('combo-box', ComboBox);
customElements.define('doc-ruler', DocRuler);
customElements.define('doc-page', DocPage);
customElements.define('scroll-bar', ScrollBar);
customElements.define('status-bar', StatusBar);
</script>
</body>
</html>
